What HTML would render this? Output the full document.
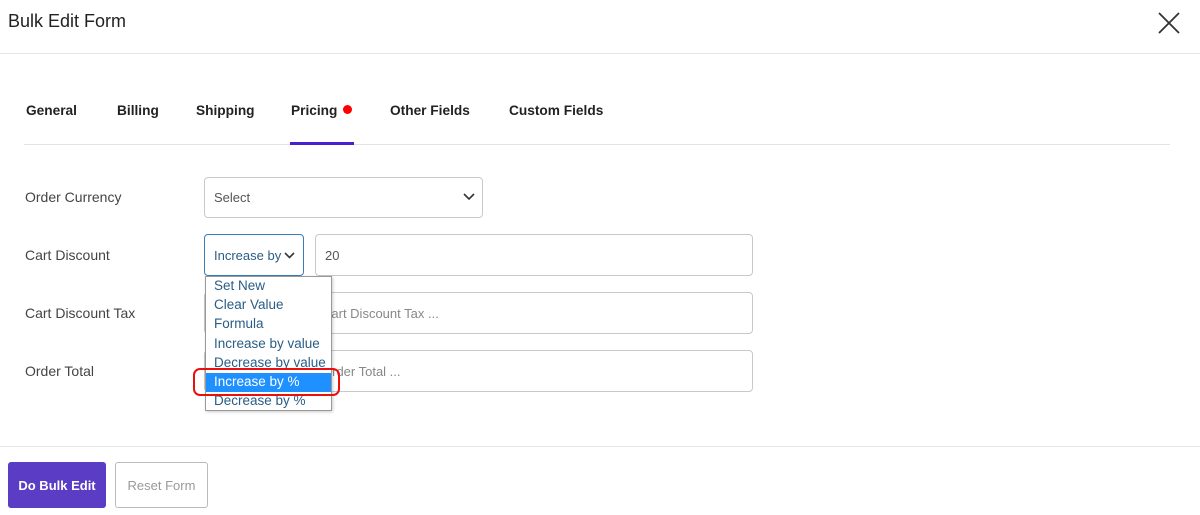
<!DOCTYPE html>
<html><head><style>
*{box-sizing:border-box;margin:0;padding:0}
body{width:1200px;height:515px;background:#fff;font-family:"Liberation Sans",sans-serif;position:relative;overflow:hidden;color:#333}
.a{position:absolute}
.tab{position:absolute;top:103px;font-size:13.7px;font-weight:bold;color:#222}
.lbl{position:absolute;left:25px;font-size:14px;color:#444}
.box{position:absolute;border:1px solid #c9c9c9;border-radius:4px;background:#fff;font-size:13px;color:#555;padding-left:9px;display:flex;align-items:center}
.ph{color:#888}
.dd{position:absolute;left:205px;top:276px;width:127px;height:135px;border:1px solid #999;background:#fff;font-size:13.5px;color:#2a5d85;box-shadow:1px 1px 3px rgba(0,0,0,.2)}
.dd div{height:19.2px;line-height:18px;padding-left:8px;white-space:nowrap}
</style></head><body>
<div class="a" style="left:8px;top:11px;font-size:18px;color:#222">Bulk Edit Form</div>
<svg class="a" style="left:1157px;top:11px" width="24" height="24"><path d="M2 2L22 22M22 2L2 22" stroke="#333" stroke-width="1.8"/></svg>
<div class="a" style="left:0;top:53px;width:1200px;height:1px;background:#e6e6e6"></div>
<div class="tab" style="left:26px">General</div>
<div class="tab" style="left:117px">Billing</div>
<div class="tab" style="left:196px">Shipping</div>
<div class="tab" style="left:291px">Pricing</div>
<div class="a" style="left:343px;top:105px;width:9px;height:9px;border-radius:50%;background:#f00"></div>
<div class="tab" style="left:390px">Other Fields</div>
<div class="tab" style="left:509px">Custom Fields</div>
<div class="a" style="left:24px;top:144px;width:1146px;height:1px;background:#e3e3e3"></div>
<div class="a" style="left:290px;top:142px;width:64px;height:3px;background:#4a1fd1"></div>

<div class="lbl" style="top:189px">Order Currency</div>
<div class="lbl" style="top:247px">Cart Discount</div>
<div class="lbl" style="top:305px">Cart Discount Tax</div>
<div class="lbl" style="top:363px">Order Total</div>

<div class="box" style="left:204px;top:177px;width:279px;height:41px">Select</div>
<svg class="a" style="left:463px;top:193px" width="12" height="8"><path d="M1 1L6 6L11 1" stroke="#333" stroke-width="1.6" fill="none"/></svg>

<div class="box" style="left:204px;top:234px;width:100px;height:42px;border-color:#3a7cb8;color:#2a5d85;overflow:hidden;white-space:nowrap"><span style="width:68px;overflow:hidden;display:inline-block">Increase by %</span></div>
<svg class="a" style="left:284px;top:252px" width="11" height="8"><path d="M1 1L5.5 5.5L10 1" stroke="#333" stroke-width="1.6" fill="none"/></svg>
<div class="box" style="left:315px;top:234px;width:438px;height:42px">20</div>
<div class="box" style="left:204px;top:292px;width:549px;height:42px"><span class="ph" style="margin-left:108px">Cart Discount Tax ...</span></div>
<div class="box" style="left:204px;top:350px;width:549px;height:42px"><span class="ph" style="margin-left:108px">Order Total ...</span></div>

<div class="dd">
<div>Set New</div><div>Clear Value</div><div>Formula</div><div>Increase by value</div><div>Decrease by value</div>
<div style="background:#1e90ff;color:#fff">Increase by %</div><div>Decrease by %</div>
</div>
<div class="a" style="left:193px;top:368px;width:147px;height:28px;border:2.5px solid #e8100f;border-radius:7px"></div>

<div class="a" style="left:0;top:446px;width:1200px;height:1px;background:#e8e8e8"></div>
<div class="a" style="left:8px;top:462px;width:98px;height:46px;background:#5b3cc4;border-radius:3px;color:#fff;font-size:13px;font-weight:bold;display:flex;align-items:center;justify-content:center">Do Bulk Edit</div>
<div class="a" style="left:115px;top:462px;width:93px;height:46px;border:1px solid #bbb;border-radius:3px;color:#999;font-size:13px;display:flex;align-items:center;justify-content:center">Reset Form</div>
</body></html>
